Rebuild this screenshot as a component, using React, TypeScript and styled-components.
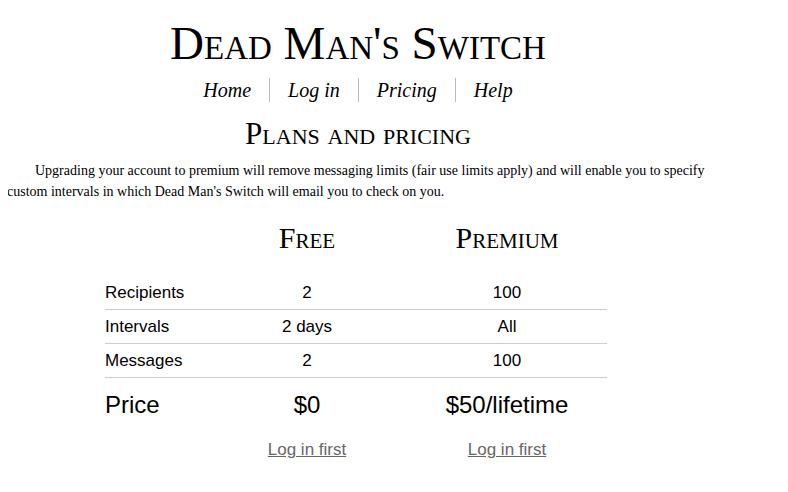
import styled, { createGlobalStyle } from "styled-components";

const GlobalStyle = createGlobalStyle`
  body {
    margin: 8px;
    font-family: "Liberation Serif", "Times New Roman", serif;
    color: #000;
    background: #fff;
  }
`;

const plans = [
  { label: "Recipients", free: "2", premium: "100" },
  { label: "Intervals", free: "2 days", premium: "All" },
  { label: "Messages", free: "2", premium: "100" },
];

export const App = () => {
  return (
    <>
      <GlobalStyle />
      <Page>
        <Title>Dead Man's Switch</Title>
        <Nav>
          <NavLink href="#">Home</NavLink>
          <NavLink href="#">Log in</NavLink>
          <NavLink href="#">Pricing</NavLink>
          <NavLink href="#">Help</NavLink>
        </Nav>
        <Heading>Plans and pricing</Heading>
        <Intro>
          Upgrading your account to premium will remove messaging limits (fair use limits apply) and will enable you to
          specify custom intervals in which Dead Man's Switch will email you to check on you.
        </Intro>
        <Table>
          <thead>
            <tr>
              <LabelHead />
              <PlanHead>Free</PlanHead>
              <PlanHead>Premium</PlanHead>
            </tr>
          </thead>
          <tbody>
            {plans.map((row) => (
              <Row key={row.label}>
                <LabelCell>{row.label}</LabelCell>
                <Cell>{row.free}</Cell>
                <Cell>{row.premium}</Cell>
              </Row>
            ))}
            <PriceRow>
              <LabelCell>Price</LabelCell>
              <Cell>$0</Cell>
              <Cell>$50/lifetime</Cell>
            </PriceRow>
            <tr>
              <LinkCell />
              <LinkCell>
                <PlanLink href="#">Log in first</PlanLink>
              </LinkCell>
              <LinkCell>
                <PlanLink href="#">Log in first</PlanLink>
              </LinkCell>
            </tr>
          </tbody>
        </Table>
      </Page>
    </>
  );
};

const Page = styled.div`
  width: 700px;
`;

const Title = styled.h1`
  margin: 9px 0 0;
  font-size: 47px;
  font-weight: 400;
  font-variant: small-caps;
  line-height: 52px;
  text-align: center;
`;

const Nav = styled.nav`
  display: flex;
  justify-content: center;
  margin-top: 9px;
`;

const NavLink = styled.a`
  padding: 2px 18px;
  font-size: 20px;
  font-style: italic;
  line-height: 20px;
  color: #000;
  text-decoration: none;
  border-left: 1px solid #bbb;

  &:first-child {
    border-left: none;
  }
`;

const Heading = styled.h2`
  margin: 16px 0 0;
  font-size: 31px;
  font-weight: 400;
  font-variant: small-caps;
  line-height: 32px;
  text-align: center;
`;

const Intro = styled.p`
  margin: 10px 0 0 -1px;
  font-size: 14px;
  line-height: 21px;
  text-indent: 28px;
`;

const Table = styled.table`
  margin: 16px 0 0 97px;
  border-collapse: collapse;
  font-family: "Liberation Sans", Arial, sans-serif;
`;

const LabelHead = styled.th`
  width: 102px;
  padding: 0;
`;

const PlanHead = styled.th`
  width: 200px;
  padding: 0 0 18px;
  font-family: "Liberation Serif", "Times New Roman", serif;
  font-size: 30px;
  font-weight: 400;
  font-variant: small-caps;
  line-height: 40px;
`;

const Row = styled.tr`
  & + & td {
    border-top: 1px solid #ccc;
  }
`;

const Cell = styled.td`
  height: 33px;
  padding: 0;
  font-size: 17px;
  text-align: center;
`;

const LabelCell = styled(Cell)`
  text-align: left;
`;

const PriceRow = styled.tr`
  td {
    height: 54px;
    font-size: 24px;
    border-top: 1px solid #ccc;
  }
`;

const LinkCell = styled.td`
  padding: 8px 0 0;
  text-align: center;
  font-size: 17px;
`;

const PlanLink = styled.a`
  color: #666;
  text-decoration: underline;
`;

export default App;
